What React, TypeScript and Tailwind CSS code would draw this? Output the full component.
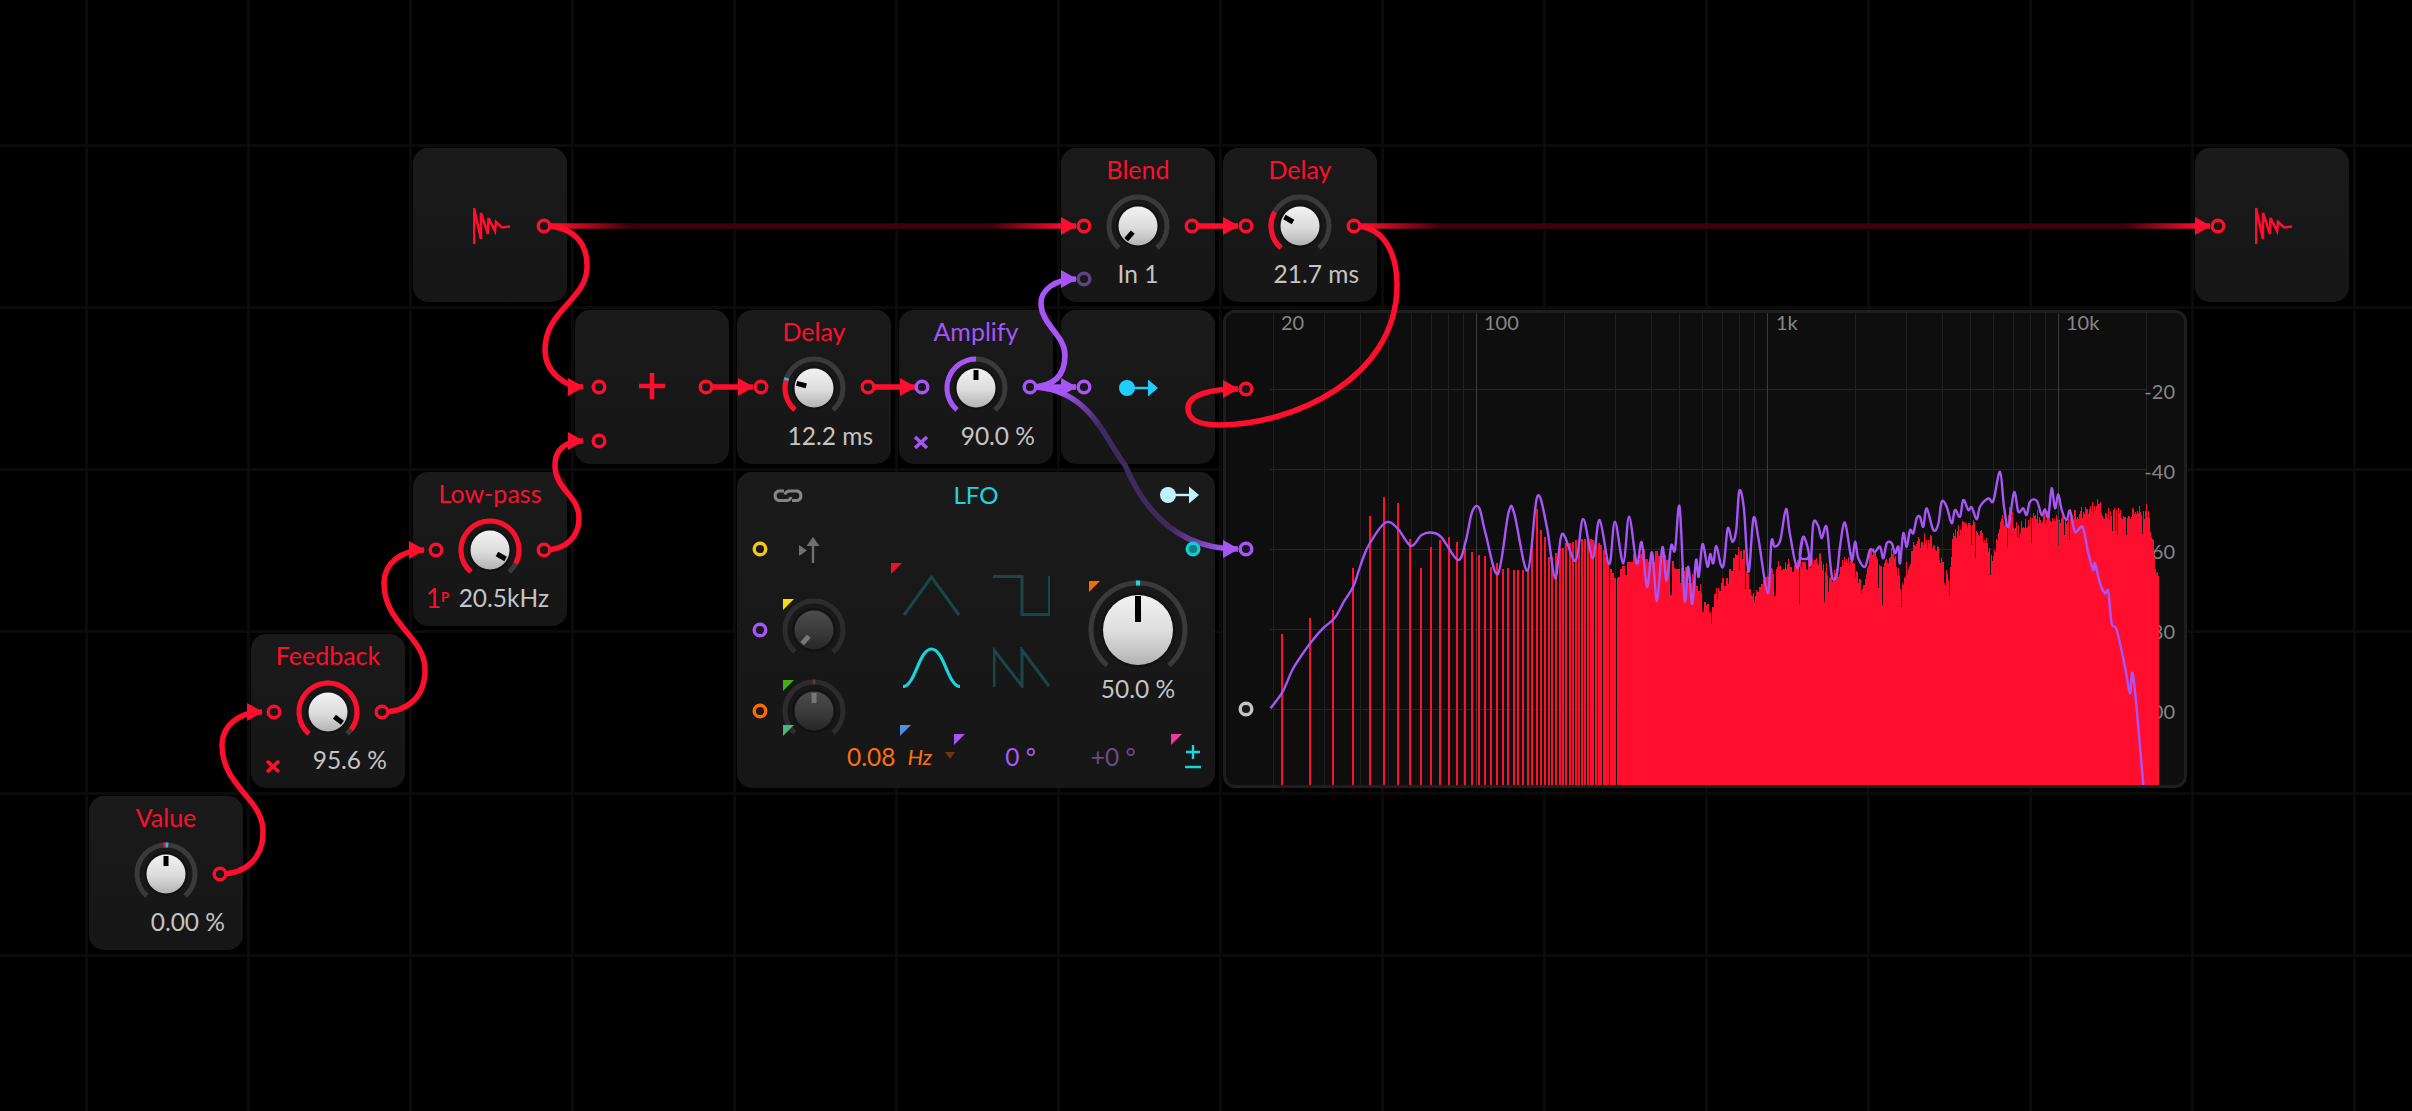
import { ReactNode, useId } from 'react';

const RED = '#ff0f2d';
const PURPLE = '#a855f7';

// Knob sweep runs -139deg .. 139deg from the top
function arcPath(cx: number, cy: number, r: number, from: number, to: number) {
  const pt = (deg: number) => {
    const a = ((deg - 90) * Math.PI) / 180;
    return `${(cx + r * Math.cos(a)).toFixed(2)} ${(cy + r * Math.sin(a)).toFixed(2)}`;
  };
  const large = Math.abs(to - from) > 180 ? 1 : 0;
  return `M${pt(from)} A${r} ${r} 0 ${large} 1 ${pt(to)}`;
}

interface KnobProps {
  angle: number;
  arcTo?: number;
  arcFrom?: number;
  color?: string;
  tick?: string;
  tickAngle?: number;
  dark?: boolean;
  large?: boolean;
}

function Knob({ angle, arcTo, arcFrom = -139, color = RED, tick, tickAngle = 0, dark = false, large = false }: KnobProps) {
  const id = useId();
  const size = large ? 106 : 70;
  const c = size / 2;
  const r = large ? 47 : 29;
  const cap = large ? 35 : 19.5;
  const track = dark ? '#2c2c2c' : '#3a3a3a';
  return (
    <svg width={size} height={size} viewBox={`0 0 ${size} ${size}`} className="block shrink-0">
      <defs>
        <linearGradient id={id} x1="0" y1="0" x2="0" y2="1">
          <stop offset="0" stopColor={dark ? '#4c4c4c' : '#f2f2f2'} />
          <stop offset="0.55" stopColor={dark ? '#3a3a3a' : '#dcdcdc'} />
          <stop offset="1" stopColor={dark ? '#262626' : '#b2b2b2'} />
        </linearGradient>
      </defs>
      <path d={arcPath(c, c, r, -139, 139)} fill="none" stroke={track} strokeWidth="5" />
      {arcTo !== undefined && <path d={arcPath(c, c, r, arcFrom, arcTo)} fill="none" stroke={color} strokeWidth="5" />}
      {tick && <path d={arcPath(c, c, r, tickAngle - 2.5, tickAngle + 2.5)} fill="none" stroke={tick} strokeWidth="5" />}
      <circle cx={c} cy={c} r={cap + 2.5} fill="#0f0f0f" opacity="0.55" />
      <circle cx={c} cy={c} r={cap} fill={`url(#${id})`} />
      <rect
        x={c - (large ? 3 : 2.5)}
        y={large ? c - 34 : c - 18}
        width={large ? 6 : 5}
        height={large ? 26 : 10}
        fill={dark ? '#777777' : '#000000'}
        transform={`rotate(${angle} ${c} ${c})`}
      />
    </svg>
  );
}

// Small corner flag marking a modulation source
function Flag({ color, className }: { color: string; className: string }) {
  return (
    <svg width="11" height="11" viewBox="0 0 11 11" className={`absolute ${className}`}>
      <polygon points="0,0 11,0 0,11" fill={color} />
    </svg>
  );
}

function CrossIcon({ color }: { color: string }) {
  return (
    <svg width="16" height="15" viewBox="0 0 16 15" className="mt-[12px] shrink-0">
      <path d="M2 2 L14 13 M14 2 L2 13" stroke={color} strokeWidth="3.6" />
    </svg>
  );
}

function SampleIcon() {
  return (
    <svg width="40" height="38" viewBox="0 0 40 38" className="block">
      <path
        d="M1 37 V1 L8 32 V6 L15 27 L15.5 11 L22 24 L23 15 L29 20.5 L37 19.5"
        fill="none"
        stroke={RED}
        strokeWidth="2.6"
      />
    </svg>
  );
}

function NoteOut({ color }: { color: string }) {
  return (
    <svg width="39" height="18" viewBox="0 0 39 18" className="block">
      <circle cx="8" cy="9" r="8" fill={color} />
      <path d="M14 9 H31" stroke={color} strokeWidth="2.4" />
      <polygon points="29,0.5 39,9 29,17.5" fill={color} />
    </svg>
  );
}

function Panel({ children, className }: { children: ReactNode; className: string }) {
  return (
    <div className={`rounded-[15px] bg-gradient-to-b from-[#1a1a1a] to-[#161616] ${className}`}>{children}</div>
  );
}

interface NodeProps {
  title?: string;
  titleColor?: string;
  knob?: KnobProps;
  value?: string;
  center?: boolean;
  left?: ReactNode;
  className: string;
}

function DeviceNode({ title, titleColor = RED, knob, value, center, left, className }: NodeProps) {
  return (
    <Panel className={`flex flex-col items-stretch ${className}`}>
      <div className="flex h-[43px] items-center justify-center text-[25px] leading-none" style={{ color: titleColor }}>
        {title}
      </div>
      <div className="flex h-[70px] items-center justify-center">{knob && <Knob {...knob} />}</div>
      <div
        className={`mt-[-3px] flex h-[32px] items-center text-[24.5px] leading-none text-[#c4c4c4] ${
          center ? 'justify-center' : 'justify-between pl-[14px] pr-[18px]'
        }`}
      >
        {left ?? (center ? null : <span />)}
        <span>{value}</span>
      </div>
    </Panel>
  );
}

function IconNode({ children, className }: { children: ReactNode; className: string }) {
  return <Panel className={`flex justify-center pt-[59px] ${className}`}>{children}</Panel>;
}

function Waves() {
  const dim = '#1a4648';
  return (
    <div className="mt-[59px] ml-[54px] grid grid-cols-[57px_57px] grid-rows-[41px_41px] gap-x-[33px] gap-y-[31px]">
      <div className="relative">
        <Flag color="#ef0f2d" className="left-[-12px] top-[-12px]" />
        <svg width="57" height="41" viewBox="0 0 57 41" className="block">
          <path d="M1 40 L28.5 2 L56 40" fill="none" stroke={dim} strokeWidth="3" />
        </svg>
      </div>
      <svg width="57" height="41" viewBox="0 0 57 41" className="block">
        <path d="M0 1.5 H29 V39.5 H56.5 V1" fill="none" stroke={dim} strokeWidth="3" />
      </svg>
      <svg width="57" height="41" viewBox="0 0 57 41" className="block">
        <path d="M0 39.5 C12 39.5 16 2 28.5 2 C41 2 45 39.5 57 39.5" fill="none" stroke="#18d4dc" strokeWidth="3.2" />
      </svg>
      <svg width="57" height="41" viewBox="0 0 57 41" className="block">
        <path d="M1 40 V3 L29 39 V3 L56 39" fill="none" stroke={dim} strokeWidth="3" />
      </svg>
    </div>
  );
}

function LfoPanel() {
  return (
    <Panel className="col-start-5 col-span-3 row-start-3 row-span-2 flex flex-col">
      <div className="grid h-[44px] grid-cols-[1fr_auto_1fr] items-center px-[16px] pt-[2px]">
        <svg width="36" height="15" viewBox="0 0 36 15" className="ml-[17px] block">
          <path
            d="M14 3 H8.5 A5 5 0 0 0 8.5 12.5 H17 A4.6 4.6 0 0 0 21 9 M22 12.5 H27.5 A5 5 0 0 0 27.5 3 H19 A4.6 4.6 0 0 0 15 6.5"
            fill="none"
            stroke="#858585"
            strokeWidth="3"
          />
        </svg>
        <span className="text-[24px] leading-none text-[#18d8e2]">LFO</span>
        <div className="justify-self-end">
          <NoteOut color="#bdf2ff" />
        </div>
      </div>
      <div className="flex h-[230px]">
        <div className="ml-[42px] flex w-[70px] shrink-0 flex-col">
          <svg width="24" height="26" viewBox="0 0 24 26" className="mt-[21px] ml-[19px] block shrink-0">
            <polygon points="1,8 9,13.5 1,19" fill="#707070" />
            <path d="M15 6 V26" stroke="#707070" strokeWidth="2.4" />
            <polygon points="15,0 21.5,9 8.5,9" fill="#707070" />
          </svg>
          <div className="relative mt-[32px]">
            <Flag color="#f6d90f" className="left-[4px] top-[4px]" />
            <Knob angle={-139} dark />
          </div>
          <div className="relative mt-[11px]">
            <Flag color="#46ae10" className="left-[4px] top-[4px]" />
            <Flag color="#45b97c" className="left-[4px] top-[49px]" />
            <Knob angle={0} dark tick="#6e3a17" />
          </div>
        </div>
        <Waves />
        <div className="mt-[61px] ml-[35px] flex flex-col items-center">
          <div className="relative">
            <Flag color="#ff6a00" className="left-[4px] top-[4px]" />
            <Knob angle={0} large tick="#18d8e2" />
          </div>
          <span className="mt-[-8px] text-[24.5px] leading-[28px] text-[#c4c4c4]">50.0 %</span>
        </div>
      </div>
      <div className="mt-[-3px] flex h-[28px] items-center pl-[110px] text-[24.5px] leading-none">
        <span className="relative text-[#ff6f0f]">
          0.08
          <Flag color="#4a90e2" className="left-[53px] top-[-20px]" />
        </span>
        <span className="ml-[12px] text-[22px] italic text-[#ff6f0f]">Hz</span>
        <svg width="10" height="7" viewBox="0 0 10 7" className="ml-[13px] mb-[3px]">
          <polygon points="0,0 10,0 5,7" fill="#6b3510" />
        </svg>
        <span className="relative ml-[50px] text-[#ab5cf8]">
          0 °
          <Flag color="#a855f7" className="left-[-51px] top-[-11px]" />
        </span>
        <span className="ml-[55px] text-[#6a4a8c]">+0 °</span>
        <div className="relative ml-[49px]">
          <Flag color="#f0379b" className="left-[-14px] top-[-11px]" />
          <svg width="16" height="24" viewBox="0 0 16 24" className="block">
            <path d="M8 0 V14 M1 7 H15 M0 22 H16" stroke="#18d4dc" strokeWidth="2.4" />
          </svg>
        </div>
      </div>
    </Panel>
  );
}

// --- spectrum ------------------------------------------------------------

const PLOT_LEFT = 1223;
const PLOT_TOP = 310;
const BOTTOM = 785;
const xOf = (hz: number) => 1476 + 291 * Math.log10(hz / 100);
const zoomY = (y: number) => 300 + y / 3;

// bar tops for FFT bins 4.. up to where the bars merge, traced from the picture
const LOW_BINS = [
  1003, 955, 930, 805, 648, 591, 609, 718, 805, 742, 721, 712, 727, 745, 757, 766, 768, 800, 790, 808, 805, 810, 810,
  810, 810, 726, 627, 690, 712, 770, 770, 760, 745, 745, 730, 730, 725, 720, 720, 718, 718, 718, 718, 720, 722, 730,
  735, 750, 770, 790, 808, 820, 835, 835,
];

const ENVELOPE: [number, number][] = [
  [1617, 578], [1634, 560], [1646, 555], [1669, 563], [1684, 573], [1700, 590], [1708, 608], [1723, 583], [1742, 540],
  [1752, 600], [1761, 583], [1784, 563], [1800, 567], [1817, 557], [1833, 577], [1850, 557], [1862, 590], [1870, 548],
  [1883, 570], [1893, 545], [1900, 587], [1917, 537], [1933, 543], [1948, 575], [1953, 537], [1963, 525], [1977, 527],
  [1992, 557], [2000, 527], [2008, 508], [2017, 530], [2033, 517], [2067, 517], [2087, 510], [2100, 505], [2146, 505],
  [2150, 527], [2153, 543], [2155, 570], [2159, 580],
];

function noise(n: number) {
  const s = Math.sin(n * 12.9898) * 43758.5453;
  return s - Math.floor(s);
}

function envelopeAt(x: number) {
  for (let i = 1; i < ENVELOPE.length; i++) {
    const [x0, y0] = ENVELOPE[i - 1];
    const [x1, y1] = ENVELOPE[i];
    if (x <= x1) return y0 + ((y1 - y0) * (x - x0)) / (x1 - x0);
  }
  return 580;
}

function buildBars() {
  let d = '';
  LOW_BINS.forEach((top, i) => {
    const x = Math.round(xOf((i + 4) * 5.383));
    d += `M${x - PLOT_LEFT - 1} ${Math.round(zoomY(top)) - PLOT_TOP}h2V${BOTTOM - PLOT_TOP}h-2z`;
  });
  let x = 1618;
  while (x < 2159) {
    // one fft bin covers a couple of pixels low down, less than one further up
    const bin = (100 * Math.pow(10, (x - 1476) / 291)) / 5.383;
    const w = Math.max(1, Math.round(126 / bin + (noise(x + 9) > 0.6 ? 1 : 0)));
    const n = noise(x);
    let top = envelopeAt(x) + (noise(x + 0.37) - 0.5) * 15;
    if (n > 0.9) top += 8 + 24 * noise(x + 1.7);
    if (x > 2100 && x < 2146) top = 506 + noise(x + 3.1) * 14 + (n > 0.92 ? 16 : 0);
    d += `M${x - PLOT_LEFT} ${Math.round(top - PLOT_TOP)}h${w}V${BOTTOM - PLOT_TOP}h-${w}z`;
    x += w;
  }
  return d;
}

const LINE_LOW: [number, number][] = [
  [158, 1225], [190, 1175], [215, 1110], [240, 1065], [265, 1025], [295, 985], [325, 955], [350, 905], [375, 858],
  [395, 790], [415, 735], [458, 668], [490, 685], [525, 738], [553, 705], [580, 698], [605, 712], [648, 780], [668, 725],
  [685, 635], [703, 623], [720, 700], [752, 822], [780, 638], [795, 640], [830, 812], [855, 590], [880, 680], [902, 835],
  [920, 702], [955, 782], [975, 657], [1000, 775], [1018, 660], [1043, 793], [1058, 665], [1080, 790], [1095, 650],
  [1115, 790], [1128, 727], [1142, 860], [1155, 757], [1168, 903], [1182, 742], [1193, 842], [1205, 737], [1215, 750],
  [1227, 620], [1240, 900], [1250, 800], [1260, 912], [1270, 780], [1277, 830], [1287, 732], [1300, 800], [1307, 762],
  [1315, 790], [1323, 738], [1335, 795], [1343, 790], [1353, 685], [1365, 725], [1375, 690], [1383, 573], [1395, 625],
  [1407, 815], [1420, 655], [1433, 715], [1457, 880], [1467, 725], [1475, 740], [1490, 722], [1505, 627], [1515, 700],
  [1535, 805], [1550, 712], [1565, 770],
];

const LINE_HIGH: [number, number][] = [
  [0, 770], [10, 710], [25, 750], [32, 795], [40, 670], [55, 678], [65, 715], [80, 682], [95, 825], [110, 825],
  [120, 740], [135, 668], [155, 780], [165, 725], [175, 775], [195, 800], [210, 750], [225, 755], [240, 740], [250, 775],
  [260, 730], [275, 730], [285, 760], [295, 740], [300, 790], [310, 700], [320, 740], [330, 690], [340, 700], [350, 655],
  [360, 650], [370, 680], [380, 625], [400, 690], [415, 672], [425, 605], [440, 620], [455, 670], [465, 630], [480, 650],
  [490, 600], [505, 630], [515, 622], [530, 658], [540, 620], [565, 595], [580, 603], [600, 515], [612, 620], [625, 680],
  [642, 577], [655, 635], [670, 625], [680, 645], [690, 605], [710, 602], [725, 645], [735, 628], [745, 650], [755, 565],
  [765, 625], [775, 583], [785, 630], [800, 660], [810, 632], [825, 695], [848, 682], [865, 760], [880, 810], [885, 790],
  [900, 850], [915, 880], [925, 875], [935, 970], [950, 990], [975, 1100], [990, 1180], [1000, 1130], [1030, 1455],
];

// Catmull-Rom through the traced points so the peaks come out round
function buildLine() {
  const pts = [
    ...LINE_LOW.map(([x, y]) => [1210 + x / 2.613 - PLOT_LEFT, zoomY(y) - PLOT_TOP]),
    ...LINE_HIGH.map(([x, y]) => [1800 + x / 3 - PLOT_LEFT, zoomY(y) - PLOT_TOP]),
  ];
  let d = `M${pts[0][0].toFixed(1)} ${pts[0][1].toFixed(1)}`;
  for (let i = 0; i < pts.length - 1; i++) {
    const p0 = pts[Math.max(0, i - 1)];
    const p1 = pts[i];
    const p2 = pts[i + 1];
    const p3 = pts[Math.min(pts.length - 1, i + 2)];
    const c1x = p1[0] + (p2[0] - p0[0]) / 6;
    const c1y = p1[1] + (p2[1] - p0[1]) / 6;
    const c2x = p2[0] - (p3[0] - p1[0]) / 6;
    const c2y = p2[1] - (p3[1] - p1[1]) / 6;
    d += `C${c1x.toFixed(1)} ${c1y.toFixed(1)} ${c2x.toFixed(1)} ${c2y.toFixed(1)} ${p2[0].toFixed(1)} ${p2[1].toFixed(1)}`;
  }
  return d;
}

const MINOR_HZ = [20, 30, 40, 50, 60, 70, 80, 90, 200, 300, 400, 500, 600, 700, 800, 900, 2000, 3000, 4000, 5000, 6000, 7000, 8000, 9000, 20000];
const MAJOR_HZ = [100, 1000, 10000];
const DB_ROWS = [389, 469, 549, 629, 709];
const DB_LABELS: [string, number][] = [['-20', 393], ['-40', 473], ['-60', 553], ['-80', 633], ['-100', 713], ['-120', 793]];
const FREQ_LABELS: [string, number][] = [['20', 1281], ['100', 1484], ['1k', 1776], ['10k', 2066]];

function Spectrum() {
  return (
    <div className="col-start-8 col-span-6 row-start-2 row-span-3 overflow-hidden rounded-[12px] border-[3px] border-[#1e1e1e] bg-[#0e0e0e]">
      <svg width="967" height="478" viewBox="0 0 967 478" className="ml-[-3px] mt-[-3px] block max-w-none">
        {DB_ROWS.map(y => (
          <rect key={y} x={1270 - PLOT_LEFT} y={y - PLOT_TOP} width={2147 - 1270} height="1" fill="#242424" />
        ))}
        {MINOR_HZ.map(hz => (
          <rect key={hz} x={Math.round(xOf(hz)) - PLOT_LEFT} y="3" width="1" height={BOTTOM - PLOT_TOP} fill="#202020" />
        ))}
        {MAJOR_HZ.map(hz => (
          <rect key={hz} x={Math.round(xOf(hz)) - PLOT_LEFT} y="3" width="1" height={BOTTOM - PLOT_TOP} fill="#3c3c3c" />
        ))}
        {FREQ_LABELS.map(([t, x]) => (
          <text key={t} x={x - PLOT_LEFT} y="20" fontFamily="Lato, sans-serif" fontSize="20" fill="#868686">
            {t}
          </text>
        ))}
        {DB_LABELS.map(([t, y]) => (
          <text key={t} x={2175 - PLOT_LEFT} y={y + 6 - PLOT_TOP} textAnchor="end" fontFamily="Lato, sans-serif" fontSize="20" fill="#868686">
            {t}
          </text>
        ))}
        <path d={buildBars()} fill={RED} />
        <path d={buildLine()} fill="none" stroke={PURPLE} strokeWidth="2.4" strokeLinejoin="round" />
        <rect x="0" y={BOTTOM - PLOT_TOP} width="967" height="4" fill="#1e1e1e" />
      </svg>
    </div>
  );
}

// --- wiring --------------------------------------------------------------

const ARROWS: [number, number, string][] = [
  [262, 712, RED], [424, 550, RED], [583, 387, RED], [583, 441, RED], [1076, 226, RED], [1238, 226, RED], [2210, 226, RED],
  [753, 387, RED], [915, 387, RED], [1238, 389, RED], [1076, 387, PURPLE], [1076, 279, PURPLE], [1238, 549, PURPLE],
];

const PORTS: [number, number, string, string?][] = [
  [220, 874, RED], [274, 712, RED], [382, 712, RED], [436, 550, RED], [544, 550, RED], [544, 226, RED], [599, 387, RED],
  [599, 441, RED], [706, 387, RED], [761, 387, RED], [868, 387, RED], [922, 387, PURPLE], [1030, 387, PURPLE],
  [1084, 387, PURPLE], [1084, 226, RED], [1192, 226, RED], [1084, 279, '#5f4383'], [1246, 226, RED], [1354, 226, RED],
  [2218, 226, RED], [1246, 389, RED], [1246, 549, PURPLE], [1246, 709, '#c4c4c4'], [760, 549, '#f5c518'], [760, 630, PURPLE],
  [760, 711, '#ff6a00'], [1193, 549, '#16c8d0', '#0b8080'],
];

function Wires() {
  return (
    <svg width="2412" height="1111" viewBox="0 0 2412 1111" className="pointer-events-none absolute left-0 top-0">
      <defs>
        <linearGradient id="fadeA" gradientUnits="userSpaceOnUse" x1="544" y1="0" x2="1076" y2="0">
          <stop offset="0.02" stopColor={RED} />
          <stop offset="0.16" stopColor="#40000a" />
          <stop offset="0.84" stopColor="#40000a" />
          <stop offset="0.98" stopColor={RED} />
        </linearGradient>
        <linearGradient id="fadeB" gradientUnits="userSpaceOnUse" x1="1354" y1="0" x2="2210" y2="0">
          <stop offset="0.01" stopColor={RED} />
          <stop offset="0.1" stopColor="#40000a" />
          <stop offset="0.9" stopColor="#40000a" />
          <stop offset="0.99" stopColor={RED} />
        </linearGradient>
        <linearGradient id="fadeC" gradientUnits="userSpaceOnUse" x1="1030" y1="387" x2="1238" y2="549">
          <stop offset="0.1" stopColor={PURPLE} />
          <stop offset="0.3" stopColor="#3f2a5e" />
          <stop offset="0.75" stopColor="#3f2a5e" />
          <stop offset="0.97" stopColor={PURPLE} />
        </linearGradient>
      </defs>
      <g fill="none" strokeWidth="5.5">
        <path d="M544 226 H1076" stroke="url(#fadeA)" />
        <path d="M1354 226 H2210" stroke="url(#fadeB)" />
        <path d="M1030 387 C1090 387 1105 440 1125 465 C1150 525 1190 549 1238 549" stroke="url(#fadeC)" />
        <path d="M220 874 C246 874 264 858 263 830 C262 798 222 786 222 745 C222 725 240 712 262 712" stroke={RED} />
        <path d="M382 712 C408 712 426 696 425 668 C424 636 384 624 384 583 C384 563 402 550 424 550" stroke={RED} />
        <path d="M544 550 C568 550 579 535 579 518 C579 495 555 490 555 465 C555 450 565 441 583 441" stroke={RED} />
        <path d="M544 226 C570 226 588 240 587 268 C586 300 545 310 545 350 C545 372 565 387 583 387" stroke={RED} />
        <path d="M1192 226 H1238 M706 387 H753 M868 387 H915" stroke={RED} />
        <path d="M1354 226 C1385 226 1397 255 1397 285 C1397 380 1290 425 1220 425 C1195 425 1188 418 1188 408 C1188 395 1210 389 1238 389" stroke={RED} />
        <path d="M1030 387 H1076" stroke={PURPLE} />
        <path d="M1030 387 C1055 387 1065 375 1065 355 C1065 335 1041 325 1041 303 C1041 290 1055 279 1076 279" stroke={PURPLE} />
      </g>
      {ARROWS.map(([x, y, c]) => (
        <polygon key={`${x}-${y}`} points={`${x - 15},${y - 9} ${x + 1},${y} ${x - 15},${y + 9}`} fill={c} />
      ))}
      {PORTS.map(([x, y, c, fill]) => (
        <circle key={`${x}-${y}`} cx={x} cy={y} r="5.8" fill={fill ?? '#181818'} stroke={c} strokeWidth="3.4" />
      ))}
    </svg>
  );
}

export default function App() {
  return (
    <div className="relative h-[1111px] w-[2412px] overflow-hidden bg-black bg-[linear-gradient(to_right,#0b0b0b_3px,transparent_3px),linear-gradient(to_bottom,#0b0b0b_3px,transparent_3px)] bg-[size:162px_162px] bg-[position:85px_144px] font-['Lato',sans-serif]">
      <div className="grid grid-cols-[repeat(14,154px)] grid-rows-[repeat(5,154px)] gap-2 pl-[89px] pt-[148px]">
        <IconNode className="col-start-3 row-start-1 pl-[6px]">
          <SampleIcon />
        </IconNode>
        <DeviceNode className="col-start-7 row-start-1" title="Blend" knob={{ angle: -139 }} value="In 1" center />
        <DeviceNode className="col-start-8 row-start-1" title="Delay" knob={{ angle: -60, arcTo: -61 }} value="21.7 ms" />
        <IconNode className="col-start-14 row-start-1 pl-[6px]">
          <SampleIcon />
        </IconNode>

        <IconNode className="col-start-4 row-start-2">
          <svg width="26" height="26" viewBox="0 0 26 26" className="mt-[4px] block">
            <path d="M13 0 V26 M0 13 H26" stroke={RED} strokeWidth="4.6" />
          </svg>
        </IconNode>
        <DeviceNode className="col-start-5 row-start-2" title="Delay" knob={{ angle: -75, arcTo: -72, tick: '#22b8e0', tickAngle: -72 }} value="12.2 ms" />
        <DeviceNode
          className="col-start-6 row-start-2"
          title="Amplify"
          titleColor={PURPLE}
          knob={{ angle: 0, arcTo: 0, color: PURPLE }}
          value="90.0 %"
          left={<CrossIcon color={PURPLE} />}
        />
        <IconNode className="col-start-7 row-start-2">
          <div className="mt-[10px]">
            <NoteOut color="#22ccff" />
          </div>
        </IconNode>
        <Spectrum />

        <DeviceNode
          className="col-start-3 row-start-3"
          title="Low-pass"
          knob={{ angle: 120, arcTo: 118 }}
          value="20.5kHz"
          left={
            <span className="ml-[-1px] whitespace-nowrap text-[26px] leading-none text-[#ff0f2d]">
              1<sup className="text-[13px] font-bold">P</sup>
            </span>
          }
        />
        <LfoPanel />

        <DeviceNode className="col-start-2 row-start-4" title="Feedback" knob={{ angle: 127, arcTo: 127 }} value="95.6 %" left={<CrossIcon color={RED} />} />
        <DeviceNode
          className="col-start-1 row-start-5"
          title="Value"
          knob={{ angle: 0, arcFrom: -5, arcTo: 0, tick: '#22b8e0', tickAngle: 2 }}
          value="0.00 %"
        />
      </div>
      <Wires />
    </div>
  );
}
